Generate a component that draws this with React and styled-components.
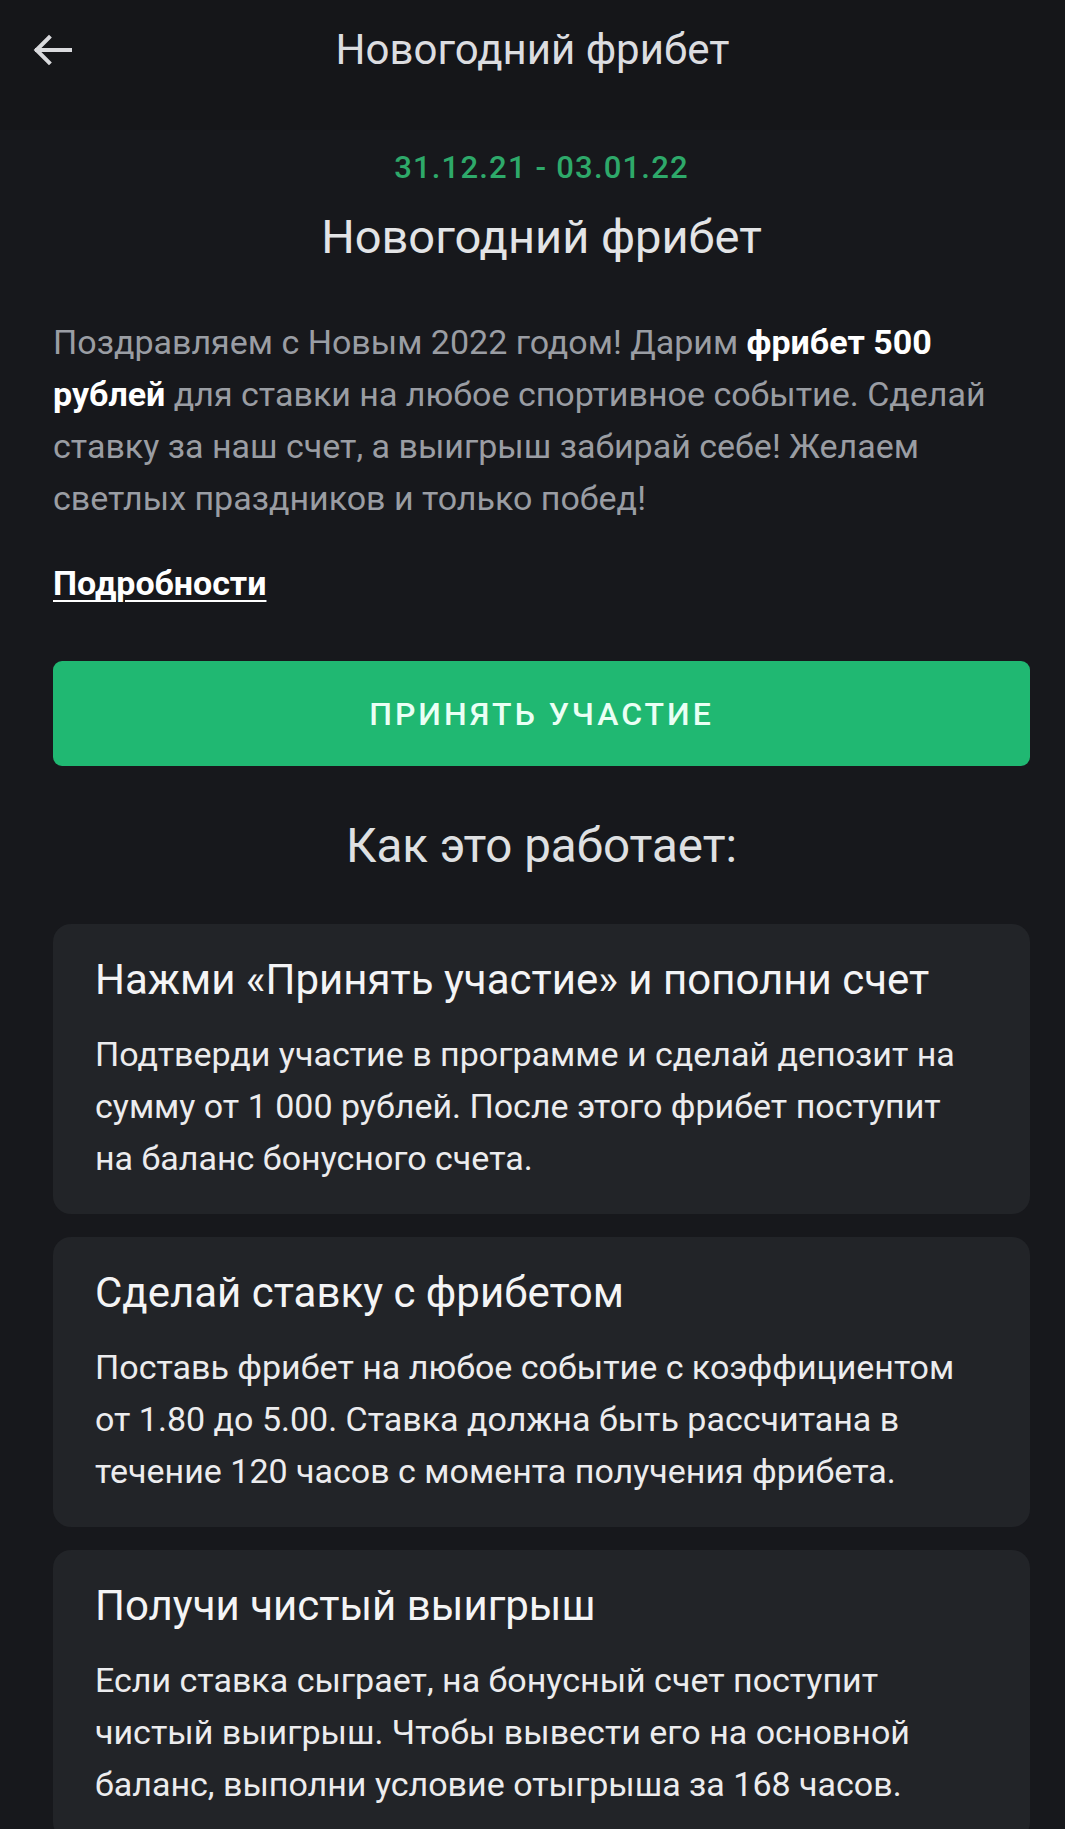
import styled, { createGlobalStyle } from 'styled-components'

const GlobalStyle = createGlobalStyle`
	html, body {
		margin: 0;
		padding: 0;
		background: #17181c;
	}
	body {
		font-family: Roboto, "Noto Sans", "Liberation Sans", sans-serif;
		color: #e6e7e9;
	}
`

const Header = styled.header`
	height: 130px;
	background: #151619;
	display: flex;
	align-items: flex-start;
	justify-content: center;
	position: relative;
	padding-top: 22px;
	box-sizing: border-box;
`

const BackButton = styled.button`
	position: absolute;
	left: 28px;
	top: 30px;
	width: 48px;
	height: 40px;
	padding: 0;
	border: none;
	background: none;
	color: #d9dadd;
	display: flex;
	align-items: center;
	justify-content: center;
	cursor: pointer;
`

const HeaderTitle = styled.h1`
	margin: 0;
	font-size: 42px;
	font-weight: 400;
	line-height: 56px;
	color: #dcdde0;
`

const Content = styled.main`
	padding: 18px 35px 40px 53px;
	display: flex;
	flex-direction: column;
`

const Dates = styled.div`
	text-align: center;
	color: #2ea96a;
	font-size: 31px;
	font-weight: 500;
	letter-spacing: 1.2px;
	line-height: 40px;
`

const Title = styled.h2`
	margin: 21px 0 0;
	text-align: center;
	font-size: 47px;
	font-weight: 400;
	line-height: 56px;
	color: #e3e4e6;
`

const Intro = styled.p`
	margin: 51px 0 0;
	width: 977px;
	font-size: 34px;
	line-height: 52px;
	color: #9a9da3;

	b {
		color: #ffffff;
		font-weight: 700;
	}
`

const MoreLink = styled.a`
	display: inline-block;
	margin-top: 39px;
	align-self: flex-start;
	font-size: 34px;
	font-weight: 700;
	line-height: 40px;
	color: #ffffff;
	text-decoration: underline;
	text-underline-offset: 5px;
	text-decoration-thickness: 2px;
`

const JoinButton = styled.button`
	margin-top: 58px;
	width: 977px;
	height: 105px;
	border: none;
	border-radius: 9px;
	background: #20b872;
	color: #eafff4;
	font-family: inherit;
	font-size: 32px;
	font-weight: 500;
	letter-spacing: 3px;
	cursor: pointer;
`

const SectionTitle = styled.h3`
	margin: 50px 0 0;
	text-align: center;
	font-size: 47.5px;
	font-weight: 400;
	line-height: 60px;
	color: #dfe0e2;
	width: 977px;
`

const Steps = styled.div`
	margin-top: 48px;
	width: 977px;
	display: flex;
	flex-direction: column;
	gap: 23px;
`

const StepCard = styled.section`
	background: #222428;
	border-radius: 18px;
	padding: 29px 55px 30px 42px;
`

const StepTitle = styled.h4`
	margin: 0;
	font-size: 42px;
	font-weight: 400;
	line-height: 54px;
	color: #f4f4f5;
`

const StepText = styled.p`
	margin: 21px 0 0;
	font-size: 34px;
	line-height: 52px;
	color: #ececee;
`

const ArrowLeft = () => (
	<svg width="40" height="32" viewBox="0 0 40 32" fill="none">
		<path d="M38 16H5M17 3.5L4.5 16L17 28.5" stroke="currentColor" strokeWidth="4" strokeLinecap="square" />
	</svg>
)

const steps = [
	{
		title: 'Нажми «Принять участие» и пополни счет',
		text: 'Подтверди участие в программе и сделай депозит на сумму от 1 000 рублей. После этого фрибет поступит на баланс бонусного счета.'
	},
	{
		title: 'Сделай ставку с фрибетом',
		text: 'Поставь фрибет на любое событие с коэффициентом от 1.80 до 5.00. Ставка должна быть рассчитана в течение 120 часов с момента получения фрибета.'
	},
	{
		title: 'Получи чистый выигрыш',
		text: 'Если ставка сыграет, на бонусный счет поступит чистый выигрыш. Чтобы вывести его на основной баланс, выполни условие отыгрыша за 168 часов.'
	}
]

export default function App() {
	return <>
		<GlobalStyle />
		<Header>
			<BackButton aria-label="Назад"><ArrowLeft /></BackButton>
			<HeaderTitle>Новогодний фрибет</HeaderTitle>
		</Header>
		<Content>
			<Dates>31.12.21 - 03.01.22</Dates>
			<Title>Новогодний фрибет</Title>
			<Intro>
				Поздравляем с Новым 2022 годом! Дарим <b>фрибет 500 рублей</b> для ставки на любое спортивное событие. Сделай ставку за наш счет, а выигрыш забирай себе! Желаем светлых праздников и только побед!
			</Intro>
			<MoreLink href="#">Подробности</MoreLink>
			<JoinButton>ПРИНЯТЬ УЧАСТИЕ</JoinButton>
			<SectionTitle>Как это работает:</SectionTitle>
			<Steps>
				{steps.map((s, i) => <StepCard key={i}>
					<StepTitle>{s.title}</StepTitle>
					<StepText>{s.text}</StepText>
				</StepCard>)}
			</Steps>
		</Content>
	</>
}
